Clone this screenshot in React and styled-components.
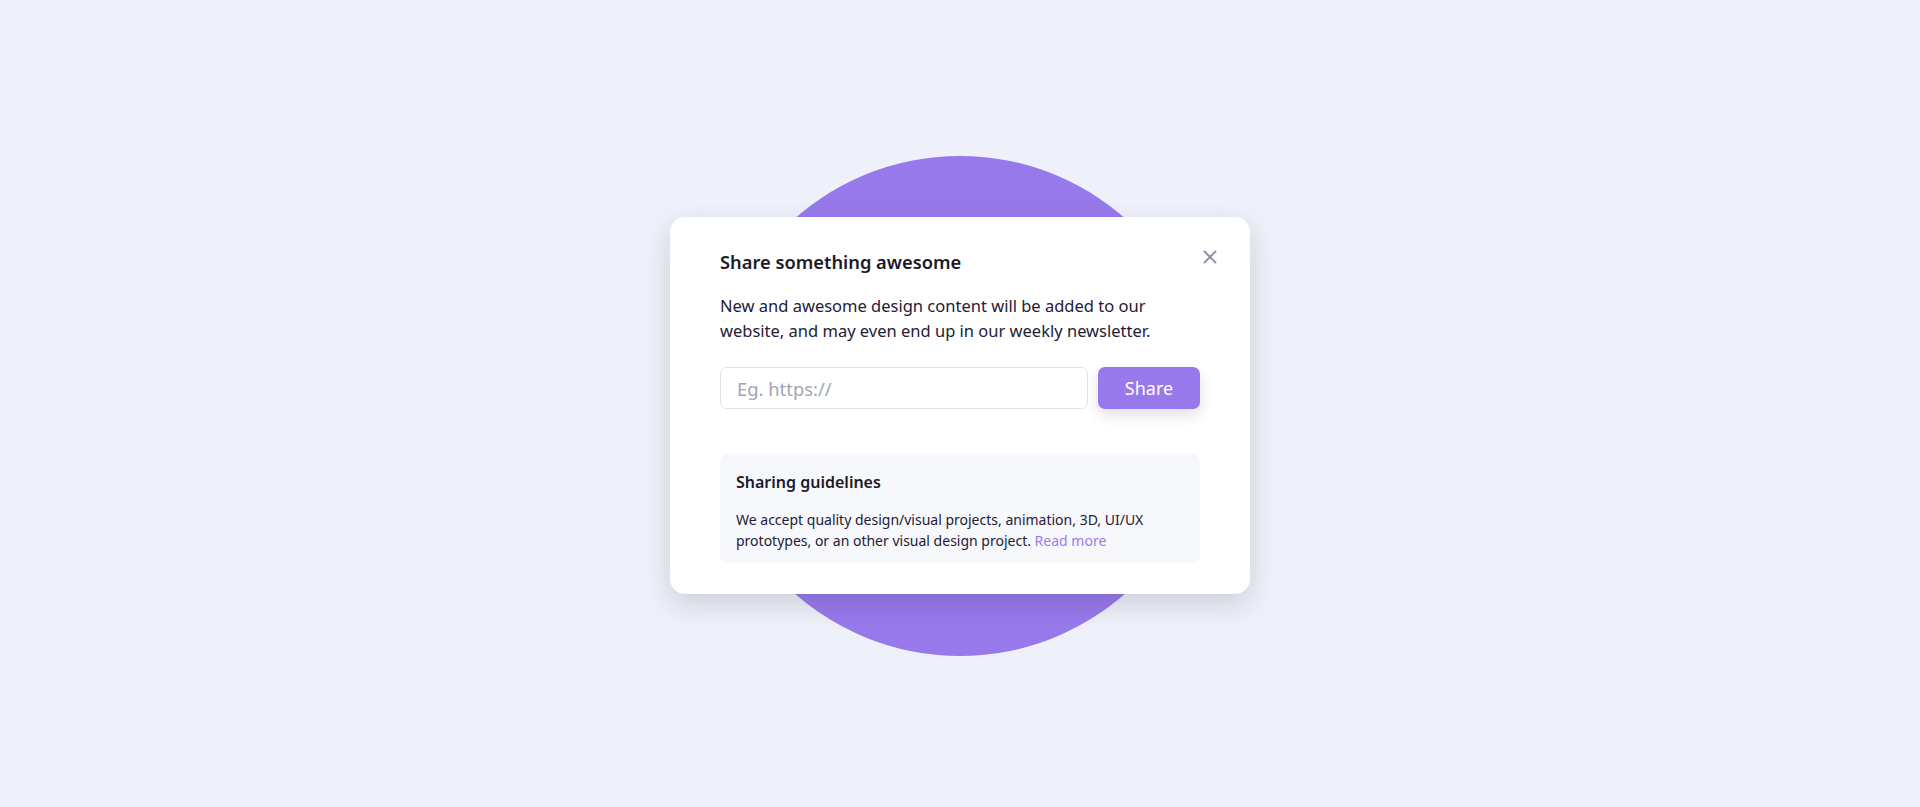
import React from "react";
import styled, { createGlobalStyle } from "styled-components";

const GlobalStyle = createGlobalStyle`
  * {
    box-sizing: border-box;
  }
  body {
    margin: 0;
    background: #eef1f9;
    font-family: "Noto Sans", "Open Sans", sans-serif;
    color: #1e1b2e;
  }
`;

const Page = styled.main`
  min-height: 100vh;
  padding-top: 4px;
  display: grid;
  place-items: center;
`;

const Stage = styled.div`
  display: grid;
  place-items: center;
  > * {
    grid-area: 1 / 1;
  }
`;

const Blob = styled.div`
  width: 500px;
  height: 500px;
  border-radius: 50%;
  background: #9879ec;
`;

const Card = styled.section`
  position: relative;
  width: 580px;
  padding: 31px 50px 31px;
  background: #fff;
  border-radius: 15px;
  box-shadow: 0 10px 28px rgba(30, 30, 60, 0.16);
`;

const Title = styled.h2`
  margin: 0;
  font-size: 18.3px;
  line-height: 28px;
  font-weight: 600;
  color: #1c1a29;
`;

const CloseButton = styled.button`
  position: absolute;
  top: 30px;
  right: 30px;
  width: 20px;
  height: 20px;
  padding: 0;
  border: 0;
  background: none;
  color: #8b95a5;
  display: grid;
  place-items: center;
  cursor: pointer;
`;

const Lead = styled.p`
  margin: 17px 0 0;
  font-size: 16.5px;
  line-height: 25px;
  color: #232036;
`;

const Form = styled.form`
  display: flex;
  gap: 10px;
  margin-top: 24px;
`;

const Input = styled.input`
  flex: 1;
  height: 42px;
  padding: 0 16px;
  border: 1px solid #e2e3e8;
  border-radius: 6px;
  font-family: inherit;
  font-size: 18.4px;
  color: #1e1b2e;
  outline: none;
  &::placeholder {
    color: #a0a6b3;
  }
`;

const SubmitButton = styled.button`
  width: 102px;
  height: 42px;
  border: 0;
  border-radius: 7px;
  background: #9879ec;
  color: #fff;
  font-family: inherit;
  font-size: 18px;
  box-shadow: 0 6px 14px rgba(40, 30, 80, 0.14);
  cursor: pointer;
`;

const Guidelines = styled.div`
  margin-top: 45px;
  padding: 16px 16px 12px;
  background: #f7f8fc;
  border-radius: 8px;
`;

const GuideTitle = styled.h3`
  margin: 0;
  font-size: 16px;
  line-height: 24px;
  font-weight: 600;
  color: #1c1a29;
`;

const GuideText = styled.p`
  margin: 15px 0 0;
  font-size: 14px;
  line-height: 21px;
  color: #232036;
  a {
    color: #9b7bf0;
    text-decoration: none;
  }
`;

const App = () => (
  <>
    <GlobalStyle />
    <Page>
      <Stage>
        <Blob />
        <Card>
          <Title>Share something awesome</Title>
          <CloseButton aria-label="Close">
            <svg width="14" height="14" viewBox="0 0 14 14" fill="none">
              <path d="M1.5 1.5l11 11M12.5 1.5l-11 11" stroke="currentColor" strokeWidth="2" strokeLinecap="round" />
            </svg>
          </CloseButton>
          <Lead>
            New and awesome design content will be added to our website, and may even end up in our weekly newsletter.
          </Lead>
          <Form onSubmit={(e) => e.preventDefault()}>
            <Input placeholder="Eg. https://" />
            <SubmitButton type="submit">Share</SubmitButton>
          </Form>
          <Guidelines>
            <GuideTitle>Sharing guidelines</GuideTitle>
            <GuideText>
              We accept quality design/visual projects, animation, 3D, UI/UX prototypes, or an other visual design
              project. <a href="#">Read more</a>
            </GuideText>
          </Guidelines>
        </Card>
      </Stage>
    </Page>
  </>
);

export default App;
